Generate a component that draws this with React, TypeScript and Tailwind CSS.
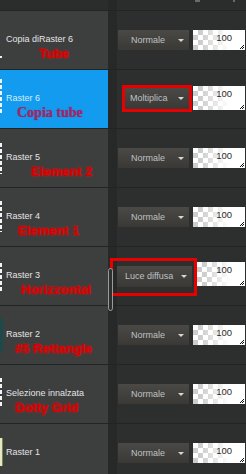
import React from "react";

type Layer = {
  name: string;
  label?: string;
  labelX: number;
  blend: string;
  selected?: boolean;
  thumb: { top: number; h: number; kind: "dash" | "dot" | "teal" | "pale" };
};

const layers: Layer[] = [
  { name: "Copia diRaster 6", label: "Tube", labelX: 33, blend: "Normale", thumb: { top: 45, h: 2, kind: "dot" } },
  { name: "Raster 6", label: "Copia tube", labelX: 11, blend: "Moltiplica", selected: true, thumb: { top: 9, h: 34, kind: "dash" } },
  { name: "Raster 5", label: "Element 2", labelX: 25, blend: "Normale", thumb: { top: 14, h: 31, kind: "dash" } },
  { name: "Raster 4", label: "Element 1", labelX: 12, blend: "Normale", thumb: { top: 13, h: 31, kind: "dash" } },
  { name: "Raster 3", label: "Horizzontal", labelX: 15, blend: "Luce diffusa", thumb: { top: 16, h: 28, kind: "dash" } },
  { name: "Raster 2", label: "#5 Rettangle", labelX: 9, blend: "Normale", thumb: { top: 12, h: 33, kind: "teal" } },
  { name: "Selezione innalzata", label: "Dotty Grid", labelX: 9, blend: "Normale", thumb: { top: 13, h: 30, kind: "dash" } },
  { name: "Raster 1", labelX: 0, blend: "Normale", thumb: { top: 14, h: 28, kind: "pale" } },
];

const thumbClass = {
  dash: "w-[2px] bg-[repeating-linear-gradient(to_bottom,#f4f4f4_0_4px,transparent_4px_6px)]",
  dot: "w-[2px] bg-[#f0f0f0]",
  teal: "w-[3px] bg-[#1c4a4a]",
  pale: "w-[3px] bg-[#e9e6c8] border-r border-[#6b8a4a]",
};

function Blend({ label, className = "" }: { label: string; className?: string }) {
  return (
    <div
      className={`flex shrink-0 items-center justify-between gap-[2px] bg-gradient-to-b from-[#4b4945] to-[#3b3936] pr-[4px] text-[9px] leading-none whitespace-nowrap text-[#bec2c5] ${className}`}
    >
      <span>{label}</span>
      <span className="mr-[1px] shrink-0 border-x-[3px] border-t-[3px] border-x-transparent border-t-[#d6d6d6]" />
    </div>
  );
}

function Opacity({ className = "" }: { className?: string }) {
  return (
    <div
      className={`relative shrink-0 bg-[linear-gradient(to_right,rgba(255,255,255,0)_15%,#fff_70%),repeating-conic-gradient(#cdcdcd_0_25%,#fff_0_50%)] bg-[length:100%_100%,10px_10px] pr-[13px] pt-[2px] text-right text-[9.5px] leading-[11px] text-[#2b2b2b] ${className}`}
    >
      100
      <svg className="absolute bottom-[1px] right-[1px]" width="4" height="4" viewBox="0 0 4 4">
        <path d="M4 0 L0 4 M4 2 L2 4" stroke="#111" strokeWidth="1" />
      </svg>
    </div>
  );
}

function Row({ layer, index }: { layer: Layer; index: number }) {
  const isMolt = index === 1;
  const isLuce = index === 4;
  return (
    <div className="relative flex h-[59px] shrink-0 border-t border-[#222424]">
      <div
        className={`flex w-[108px] shrink-0 items-start ${layer.selected ? "bg-[#129bef]" : "bg-[#3d3f3f]"}`}
      >
        <div className={thumbClass[layer.thumb.kind]} style={{ marginTop: layer.thumb.top, height: layer.thumb.h }} />
        <div className="flex min-w-0 flex-col pt-[23px]" style={{ paddingLeft: layer.thumb.kind === "dash" || layer.thumb.kind === "dot" ? 4 : 3 }}>
          <div
            className={`whitespace-nowrap text-[9px] leading-[11px] ${layer.selected ? "text-[#d6ecfb]" : "text-[#e4e4e4]"}`}
          >
            {layer.name}
          </div>
          {layer.label && (
            <div
              className={`mt-[1px] whitespace-nowrap leading-[15px] ${
                layer.selected
                  ? "font-['Liberation_Serif',serif] text-[14px] font-bold text-[#97296a] [text-shadow:0_0_1px_#a03070]"
                  : "text-[13px] font-bold text-[#d40000] [text-shadow:0_0_2px_#ff1010]"
              }`}
              style={{ marginLeft: layer.labelX }}
            >
              {layer.label}
            </div>
          )}
        </div>
      </div>
      <div className="w-[9px] shrink-0 bg-[#272929]" />
      <div className="flex flex-1 items-start bg-[#2d2f2f]">
        {isMolt ? (
          <>
            <Blend label={layer.blend} className="ml-[8px] mt-[18px] h-[21px] w-[64px] pl-[5px]" />
            <Opacity className="ml-[4px] mt-[16px] h-[24px] w-[52px]" />
          </>
        ) : isLuce ? (
          <>
            <Blend label={layer.blend} className="mt-[19px] h-[21px] w-[75px] pl-[8px]" />
            <Opacity className="ml-[5px] mt-[15px] h-[24px] w-[48px]" />
          </>
        ) : (
          <>
            <Blend label={layer.blend} className="ml-[1px] mt-[19px] h-[20px] w-[71px] pl-[13px]" />
            <Opacity className="ml-[4px] mt-[19px] h-[20px] w-[52px]" />
          </>
        )}
      </div>
      {isMolt && <div className="absolute left-[122px] top-[15px] h-[27px] w-[70px] border-[3px] border-[#e80000]" />}
      {isLuce && (
        <>
          <div className="absolute left-[110px] top-[11px] h-[38px] w-[87px] border-[3px] border-[#e80000]" />
          <div className="absolute left-[108px] top-[21px] z-10 h-[43px] w-[5px] rounded-full border border-[#9a9c9c] bg-[#2e3030]" />
        </>
      )}
    </div>
  );
}

export default function App() {
  return (
    <div className="flex h-[474px] w-[246px] flex-col overflow-hidden bg-[#2a2c2c] font-['Liberation_Sans',Arial,sans-serif]">
      <div className="relative flex h-[10px] shrink-0">
        <div className="w-[108px] bg-[#2b2d2d]" />
        <div className="w-[9px] bg-[#262828]" />
        <div className="flex flex-1 items-start bg-[#2b2d2d]">
          <div className="ml-[78px] h-[2px] w-[5px] bg-[#6a6c6c]" />
          <div className="ml-[33px] h-[2px] w-[2px] bg-[#6a6c6c]" />
        </div>
      </div>
      {layers.map((l, i) => (
        <Row key={l.name} layer={l} index={i} />
      ))}
    </div>
  );
}
